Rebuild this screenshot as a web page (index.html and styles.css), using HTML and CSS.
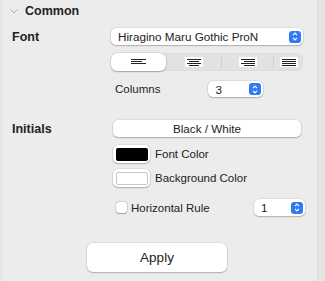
FILE: index.html
```html
<!DOCTYPE html>
<html lang="en">
<head>
  <meta charset="UTF-8">
  <meta name="viewport" content="width=device-width, initial-scale=1.0">
  <title>Common</title>
  <link rel="stylesheet" href="styles.css">
</head>
<body>
  <div class="panel">
    <!-- Section header -->
    <div class="section-head">
      <svg class="chevron" width="8" height="5" viewBox="0 0 8 5"><path d="M0.5 0.5 L4 4 L7.5 0.5" fill="none" stroke="#b0b0b0" stroke-width="1"/></svg>
      <span class="section-title">Common</span>
    </div>

    <!-- Font -->
    <div class="row font-row">
      <div class="label">Font</div>
      <div class="popup wide">
        <span class="popup-text">Hiragino Maru Gothic ProN</span>
        <span class="stepper"><svg width="6" height="9" viewBox="0 0 6 9"><path d="M1 3.2 L3 1.2 L5 3.2 M1 5.8 L3 7.8 L5 5.8" fill="none" stroke="#fff" stroke-width="1.2"/></svg></span>
      </div>
    </div>

    <!-- Alignment -->
    <div class="segmented">
      <div class="seg seg-1 selected">
        <svg width="15" height="6" viewBox="0 0 15 6"><path d="M0 0.5 H15 M0 2.5 H11 M0 4.5 H15" stroke="#222" stroke-width="1"/></svg>
      </div>
      <div class="seg seg-2">
        <svg class="icon-box" width="18" height="10" viewBox="0 0 18 10"><rect width="18" height="10" fill="#fff"/><path d="M2 2.5 H16 M4 4.5 H14 M2 6.5 H16 M4 8.5 H14" stroke="#222" stroke-width="1"/></svg>
      </div>
      <div class="seg seg-3">
        <svg class="icon-box" width="18" height="10" viewBox="0 0 18 10"><rect width="18" height="10" fill="#fff"/><path d="M2 2.5 H16 M5 4.5 H16 M2 6.5 H16 M5 8.5 H16" stroke="#222" stroke-width="1"/></svg>
      </div>
      <div class="seg seg-4">
        <svg class="icon-box" width="18" height="10" viewBox="0 0 18 10"><rect width="18" height="10" fill="#fff"/><path d="M2 2.5 H16 M2 4.5 H16 M2 6.5 H16 M2 8.5 H16" stroke="#222" stroke-width="1"/></svg>
      </div>
    </div>

    <!-- Columns -->
    <div class="sub-row columns-row">
      <span class="small-label">Columns</span>
      <div class="popup narrow">
        <span class="popup-text">3</span>
        <span class="stepper"><svg width="6" height="9" viewBox="0 0 6 9"><path d="M1 3.2 L3 1.2 L5 3.2 M1 5.8 L3 7.8 L5 5.8" fill="none" stroke="#fff" stroke-width="1.2"/></svg></span>
      </div>
    </div>

    <!-- Initials -->
    <div class="row initials-row">
      <div class="label">Initials</div>
      <button class="push">Black / White</button>
    </div>

    <div class="sub-row well-row first-well">
      <span class="well"><span class="swatch black"></span></span>
      <span class="small-label">Font Color</span>
    </div>
    <div class="sub-row well-row">
      <span class="well"><span class="swatch white"></span></span>
      <span class="small-label">Background Color</span>
    </div>

    <div class="sub-row rule-row">
      <span class="checkbox"></span>
      <span class="small-label">Horizontal Rule</span>
      <div class="popup tiny">
        <span class="popup-text">1</span>
        <span class="stepper"><svg width="6" height="9" viewBox="0 0 6 9"><path d="M1 3.2 L3 1.2 L5 3.2 M1 5.8 L3 7.8 L5 5.8" fill="none" stroke="#fff" stroke-width="1.2"/></svg></span>
      </div>
    </div>

    <div class="apply-row">
      <button class="apply">Apply</button>
    </div>
  </div>
</body>
</html>
```

FILE: styles.css
```css
body {
  margin: 0;
  width: 325px;
  height: 281px;
  overflow: hidden;
  background-color: #e4e4e4;
  font-family: "Liberation Sans", Arial, sans-serif;
  color: #222;
}
.panel {
  margin-left: 2px;
  width: 315px;
  height: 281px;
  background-color: #ececec;
  border-right: 1px solid #dedede;
}
.section-head {
  height: 21px;
  display: flex;
  align-items: center;
  padding-left: 8px;
}
.chevron {
  margin-top: 1px;
}
.section-title {
  margin-left: 7px;
  font-size: 12.5px;
  font-weight: bold;
}
.row {
  display: flex;
  align-items: center;
}
.label {
  flex: 0 0 109px;
  box-sizing: border-box;
  padding-left: 10px;
  font-size: 12.5px;
  font-weight: bold;
}
.font-row {
  margin-top: 7px;
}
.popup {
  display: flex;
  align-items: center;
  justify-content: space-between;
  box-sizing: border-box;
  height: 17px;
  padding: 0 2px 0 7px;
  background: #fff;
  border-radius: 5px;
  box-shadow: 0 0 0 0.5px rgba(0, 0, 0, 0.12), 0 1px 1.5px rgba(0, 0, 0, 0.22);
  font-size: 11.7px;
}
.popup.wide {
  width: 192px;
}
.popup.narrow {
  width: 55px;
  height: 16px;
  margin-left: 48px;
}
.popup.tiny {
  width: 51px;
  margin-left: auto;
  margin-right: 12px;
}
.stepper {
  display: flex;
  align-items: center;
  justify-content: center;
  width: 12px;
  height: 12px;
  border-radius: 3px;
  background: #2f7bf5;
}
.segmented {
  display: flex;
  margin: 8px 0 0 109px;
  width: 192px;
  height: 18px;
  background: #e2e2e2;
  border-radius: 6px;
  box-shadow: inset 0 0 0 0.5px rgba(0, 0, 0, 0.05);
}
.seg {
  display: flex;
  align-items: center;
  justify-content: center;
  box-sizing: border-box;
}
.seg-1 { width: 55px; }
.seg-2 { width: 56px; border-right: 1px solid #cfcfcf; }
.seg-3 { width: 52px; border-right: 1px solid #cfcfcf; }
.seg-4 { width: 29px; }
.seg-1.selected {
  background: #fff;
  border-radius: 6px;
  box-shadow: 0 0 0 0.5px rgba(0, 0, 0, 0.15), 0 1px 1.5px rgba(0, 0, 0, 0.25);
}
.seg-2, .seg-3 {
  height: 12px;
  margin-top: 3px;
}
.sub-row {
  display: flex;
  align-items: center;
  margin-left: 111px;
}
.small-label {
  font-size: 11.5px;
}
.columns-row {
  margin-top: 10px;
  padding-left: 2px;
}
.initials-row {
  margin-top: 23px;
}
.push {
  margin-left: 2px;
  width: 188px;
  height: 17px;
  padding: 0;
  border: none;
  background: #fff;
  border-radius: 5px;
  box-shadow: 0 0 0 0.5px rgba(0, 0, 0, 0.12), 0 1px 1.5px rgba(0, 0, 0, 0.22);
  font-family: inherit;
  font-size: 11.7px;
  color: #222;
}
.well-row {
  margin-top: 6px;
}
.well-row.first-well {
  margin-top: 8px;
}
.well {
  display: flex;
  align-items: center;
  justify-content: center;
  width: 37px;
  height: 18px;
  margin-right: 5px;
  background: #fff;
  border-radius: 5px;
  box-shadow: 0 0 0 0.5px rgba(0, 0, 0, 0.12), 0 1px 1.5px rgba(0, 0, 0, 0.22);
}
.swatch {
  width: 32px;
  height: 13px;
  border-radius: 2px;
  box-sizing: border-box;
}
.swatch.black {
  background: #000;
}
.swatch.white {
  background: #fff;
  border: 1px solid #c8c8c8;
}
.rule-row {
  margin-top: 12px;
  height: 17px;
}
.checkbox {
  width: 11px;
  height: 11px;
  margin: 0 4px 0 3px;
  background: #fff;
  border-radius: 3px;
  box-shadow: 0 0 0 0.5px rgba(0, 0, 0, 0.2), 0 0.5px 1px rgba(0, 0, 0, 0.25);
}
.apply-row {
  margin: 27px 0 0 85px;
}
.apply {
  width: 140px;
  height: 29px;
  padding: 0;
  border: none;
  background: #fff;
  border-radius: 6px;
  box-shadow: 0 0 0 0.5px rgba(0, 0, 0, 0.12), 0 1px 1.5px rgba(0, 0, 0, 0.22);
  font-family: inherit;
  font-size: 13.5px;
  color: #222;
}
```
